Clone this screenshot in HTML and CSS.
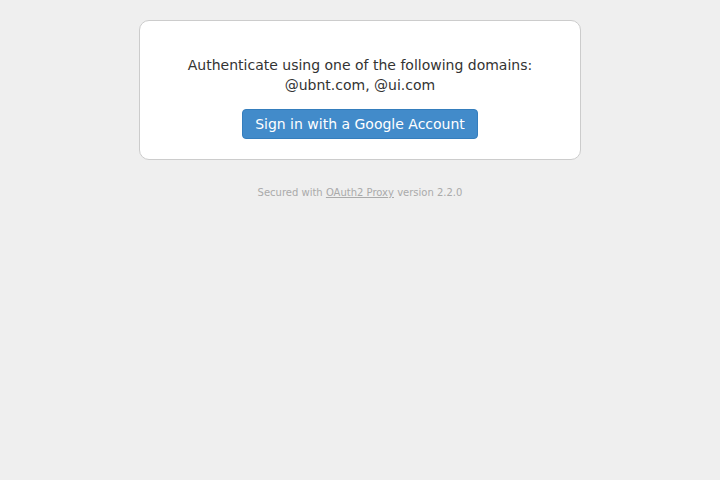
FILE: index.html
```html
<!DOCTYPE html>
<html>
<head>
<meta charset="utf-8">
<link rel="stylesheet" href="styles.css">
</head>
<body>
<div class="signin center">
  <form class="form">
    <p class="msg">Authenticate using one of the following domains:<br>@ubnt.com, @ui.com</p>
    <button type="button" class="btn">Sign in with a Google Account</button>
  </form>
</div>
<footer class="foot">Secured with <a class="foot-link" href="#">OAuth2 Proxy</a> version 2.2.0</footer>
</body>
</html>
```
FILE: styles.css
```css
html, body { margin: 0; padding: 0; }
body {
  font-family: "DejaVu Sans", sans-serif;
  font-size: 14px;
  line-height: 20px;
  color: #333;
  background: #efefef;
  padding-top: 20px;
}
.signin {
  width: 400px;
  margin: 0 auto;
  background: #fff;
  border: 1px solid #ccc;
  border-radius: 10px;
  padding: 20px;
}
.center { text-align: center; }
.form { display: flex; flex-direction: column; align-items: center; }
.msg { margin: 14px 0; }
.btn {
  font-family: "DejaVu Sans", sans-serif;
  font-size: 14px;
  line-height: 16px;
  color: #fff;
  background: #428bca;
  border: 1px solid #357ebd;
  border-radius: 4px;
  padding: 6px 12.5px;
  cursor: pointer;
}
.foot {
  font-size: 10px;
  line-height: 12px;
  color: #aaa;
  text-align: center;
  padding-top: 27px;
}
.foot-link { color: #aaa; }
```
